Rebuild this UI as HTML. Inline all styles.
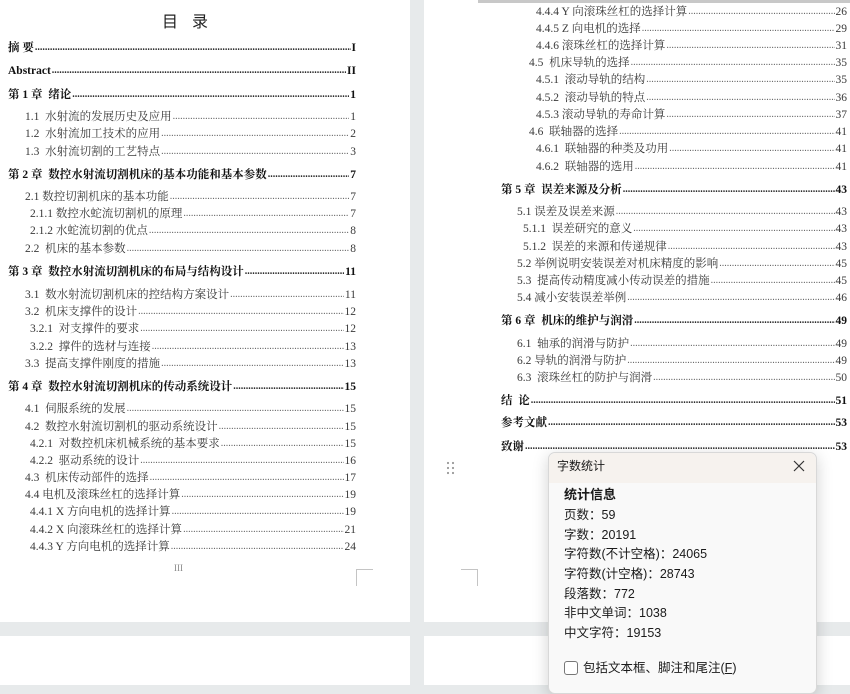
<!DOCTYPE html>
<html><head><meta charset="utf-8">
<style>
html,body{margin:0;padding:0;width:850px;height:685px;overflow:hidden;background:#e7eaeb;}
.pg{position:absolute;background:#fff;}
.r{position:absolute;display:flex;height:14px;line-height:14px;font-family:"Liberation Serif","Noto Serif CJK SC",serif;font-size:11.5px;color:#3a3a3a;white-space:nowrap;}
.r .d{flex:1;overflow:hidden;margin:0 1px;color:#666;font-size:10px;}
.r .d::before{content:"................................................................................................................................................................................................................................................";}
.b{font-weight:bold;color:#111;}
.b .d{color:#222;}
.dlg{position:absolute;left:548px;top:452px;width:267px;height:240px;background:#f9f9f9;border:1px solid #d8d8d8;border-radius:7px;box-shadow:0 4px 16px rgba(0,0,0,0.18);font-family:"Liberation Sans","Noto Sans CJK SC",sans-serif;color:#1a1a1a;}
.dlg .hd{height:30px;background:#f6f2ee;border-radius:7px 7px 0 0;}
.dlg .t{position:absolute;left:8px;top:4px;font-size:12px;}
.dlg .l{position:absolute;left:15px;font-size:12.5px;line-height:16px;}
</style></head><body>
<div class="pg" style="left:0;top:0;width:410px;height:622px"></div>
<div class="pg" style="left:424px;top:0;width:426px;height:622px"></div>
<div style="position:absolute;left:478px;top:0;width:372px;height:3px;background:#c8c8c8"></div>
<div class="pg" style="left:0;top:636px;width:410px;height:49px"></div>
<div class="pg" style="left:424px;top:636px;width:426px;height:49px"></div>

<div style="position:absolute;left:162px;top:8px;font-family:'Noto Sans CJK SC',sans-serif;font-size:16px;letter-spacing:14px;color:#222">目录</div>

<div class="r b" style="left:8px;width:348px;top:41px"><span>摘 要</span><span class="d"></span><span>I</span></div>
<div class="r b" style="left:8px;width:348px;top:64px"><span>Abstract</span><span class="d"></span><span>II</span></div>
<div class="r b" style="left:8px;width:348px;top:88px"><span>第 1 章&nbsp; 绪论</span><span class="d"></span><span>1</span></div>
<div class="r" style="left:25px;width:331px;top:110px"><span>1.1&nbsp; 水射流的发展历史及应用</span><span class="d"></span><span>1</span></div>
<div class="r" style="left:25px;width:331px;top:127px"><span>1.2&nbsp; 水射流加工技术的应用</span><span class="d"></span><span>2</span></div>
<div class="r" style="left:25px;width:331px;top:145px"><span>1.3&nbsp; 水射流切割的工艺特点</span><span class="d"></span><span>3</span></div>
<div class="r b" style="left:8px;width:348px;top:168px"><span>第 2 章&nbsp; 数控水射流切割机床的基本功能和基本参数</span><span class="d"></span><span>7</span></div>
<div class="r" style="left:25px;width:331px;top:190px"><span>2.1 数控切割机床的基本功能</span><span class="d"></span><span>7</span></div>
<div class="r" style="left:30px;width:326px;top:207px"><span>2.1.1 数控水蛇流切割机的原理</span><span class="d"></span><span>7</span></div>
<div class="r" style="left:30px;width:326px;top:224px"><span>2.1.2 水蛇流切割的优点</span><span class="d"></span><span>8</span></div>
<div class="r" style="left:25px;width:331px;top:242px"><span>2.2&nbsp; 机床的基本参数</span><span class="d"></span><span>8</span></div>
<div class="r b" style="left:8px;width:348px;top:265px"><span>第 3 章&nbsp; 数控水射流切割机床的布局与结构设计</span><span class="d"></span><span>11</span></div>
<div class="r" style="left:25px;width:331px;top:288px"><span>3.1&nbsp; 数水射流切割机床的控结构方案设计</span><span class="d"></span><span>11</span></div>
<div class="r" style="left:25px;width:331px;top:305px"><span>3.2&nbsp; 机床支撑件的设计</span><span class="d"></span><span>12</span></div>
<div class="r" style="left:30px;width:326px;top:322px"><span>3.2.1&nbsp; 对支撑件的要求</span><span class="d"></span><span>12</span></div>
<div class="r" style="left:30px;width:326px;top:340px"><span>3.2.2&nbsp; 撑件的选材与连接</span><span class="d"></span><span>13</span></div>
<div class="r" style="left:25px;width:331px;top:357px"><span>3.3&nbsp; 提高支撑件刚度的措施</span><span class="d"></span><span>13</span></div>
<div class="r b" style="left:8px;width:348px;top:380px"><span>第 4 章&nbsp; 数控水射流切割机床的传动系统设计</span><span class="d"></span><span>15</span></div>
<div class="r" style="left:25px;width:331px;top:402px"><span>4.1&nbsp; 伺服系统的发展</span><span class="d"></span><span>15</span></div>
<div class="r" style="left:25px;width:331px;top:420px"><span>4.2&nbsp; 数控水射流切割机的驱动系统设计</span><span class="d"></span><span>15</span></div>
<div class="r" style="left:30px;width:326px;top:437px"><span>4.2.1&nbsp; 对数控机床机械系统的基本要求</span><span class="d"></span><span>15</span></div>
<div class="r" style="left:30px;width:326px;top:454px"><span>4.2.2&nbsp; 驱动系统的设计</span><span class="d"></span><span>16</span></div>
<div class="r" style="left:25px;width:331px;top:471px"><span>4.3&nbsp; 机床传动部件的选择</span><span class="d"></span><span>17</span></div>
<div class="r" style="left:25px;width:331px;top:488px"><span>4.4 电机及滚珠丝杠的选择计算</span><span class="d"></span><span>19</span></div>
<div class="r" style="left:30px;width:326px;top:505px"><span>4.4.1 X 方向电机的选择计算</span><span class="d"></span><span>19</span></div>
<div class="r" style="left:30px;width:326px;top:523px"><span>4.4.2 X 向滚珠丝杠的选择计算</span><span class="d"></span><span>21</span></div>
<div class="r" style="left:30px;width:326px;top:540px"><span>4.4.3 Y 方向电机的选择计算</span><span class="d"></span><span>24</span></div>
<div class="r" style="left:174px;top:561px;font-size:9px;color:#888">III</div>

<div style="position:absolute;left:356px;top:569px;width:16px;height:16px;border-top:1px solid #c4c4c4;border-left:1px solid #c4c4c4"></div>
<div style="position:absolute;left:461px;top:569px;width:16px;height:16px;border-top:1px solid #c4c4c4;border-right:1px solid #c4c4c4"></div>

<div class="r" style="left:536px;width:311px;top:5px"><span>4.4.4 Y 向滚珠丝杠的选择计算</span><span class="d"></span><span>26</span></div>
<div class="r" style="left:536px;width:311px;top:22px"><span>4.4.5 Z 向电机的选择</span><span class="d"></span><span>29</span></div>
<div class="r" style="left:536px;width:311px;top:39px"><span>4.4.6 滚珠丝杠的选择计算</span><span class="d"></span><span>31</span></div>
<div class="r" style="left:529px;width:318px;top:56px"><span>4.5&nbsp; 机床导轨的选择</span><span class="d"></span><span>35</span></div>
<div class="r" style="left:536px;width:311px;top:73px"><span>4.5.1&nbsp; 滚动导轨的结构</span><span class="d"></span><span>35</span></div>
<div class="r" style="left:536px;width:311px;top:91px"><span>4.5.2&nbsp; 滚动导轨的特点</span><span class="d"></span><span>36</span></div>
<div class="r" style="left:536px;width:311px;top:108px"><span>4.5.3 滚动导轨的寿命计算</span><span class="d"></span><span>37</span></div>
<div class="r" style="left:529px;width:318px;top:125px"><span>4.6&nbsp; 联轴器的选择</span><span class="d"></span><span>41</span></div>
<div class="r" style="left:536px;width:311px;top:142px"><span>4.6.1&nbsp; 联轴器的种类及功用</span><span class="d"></span><span>41</span></div>
<div class="r" style="left:536px;width:311px;top:160px"><span>4.6.2&nbsp; 联轴器的选用</span><span class="d"></span><span>41</span></div>
<div class="r b" style="left:501px;width:346px;top:183px"><span>第 5 章&nbsp; 误差来源及分析</span><span class="d"></span><span>43</span></div>
<div class="r" style="left:517px;width:330px;top:205px"><span>5.1 误差及误差来源</span><span class="d"></span><span>43</span></div>
<div class="r" style="left:523px;width:324px;top:222px"><span>5.1.1&nbsp; 误差研究的意义</span><span class="d"></span><span>43</span></div>
<div class="r" style="left:523px;width:324px;top:240px"><span>5.1.2&nbsp; 误差的来源和传递规律</span><span class="d"></span><span>43</span></div>
<div class="r" style="left:517px;width:330px;top:257px"><span>5.2 举例说明安装误差对机床精度的影响</span><span class="d"></span><span>45</span></div>
<div class="r" style="left:517px;width:330px;top:274px"><span>5.3&nbsp; 提高传动精度减小传动误差的措施</span><span class="d"></span><span>45</span></div>
<div class="r" style="left:517px;width:330px;top:291px"><span>5.4 减小安装误差举例</span><span class="d"></span><span>46</span></div>
<div class="r b" style="left:501px;width:346px;top:314px"><span>第 6 章&nbsp; 机床的维护与润滑</span><span class="d"></span><span>49</span></div>
<div class="r" style="left:517px;width:330px;top:337px"><span>6.1&nbsp; 轴承的润滑与防护</span><span class="d"></span><span>49</span></div>
<div class="r" style="left:517px;width:330px;top:354px"><span>6.2 导轨的润滑与防护</span><span class="d"></span><span>49</span></div>
<div class="r" style="left:517px;width:330px;top:371px"><span>6.3&nbsp; 滚珠丝杠的防护与润滑</span><span class="d"></span><span>50</span></div>
<div class="r b" style="left:501px;width:346px;top:394px"><span>结&nbsp; 论</span><span class="d"></span><span>51</span></div>
<div class="r b" style="left:501px;width:346px;top:416px"><span>参考文献</span><span class="d"></span><span>53</span></div>
<div class="r b" style="left:501px;width:346px;top:440px"><span>致谢</span><span class="d"></span><span>53</span></div>

<svg style="position:absolute;left:446px;top:461px" width="10" height="14"><g fill="#999"><circle cx="2" cy="2" r="1.1"/><circle cx="7" cy="2" r="1.1"/><circle cx="2" cy="7" r="1.1"/><circle cx="7" cy="7" r="1.1"/><circle cx="2" cy="12" r="1.1"/><circle cx="7" cy="12" r="1.1"/></g></svg>

<div class="dlg">
<div class="hd"></div>
<div class="t">字数统计</div>
<svg style="position:absolute;left:244px;top:7px" width="12" height="12"><path d="M1 1L11 11M11 1L1 11" stroke="#333" stroke-width="1.2"/></svg>
<div class="l" style="top:34px;font-weight:bold;font-size:13px">统计信息</div>
<div class="l" style="top:54px">页数：59</div>
<div class="l" style="top:74px">字数：20191</div>
<div class="l" style="top:93px">字符数(不计空格)：24065</div>
<div class="l" style="top:113px">字符数(计空格)：28743</div>
<div class="l" style="top:133px">段落数：772</div>
<div class="l" style="top:152px">非中文单词：1038</div>
<div class="l" style="top:172px">中文字符：19153</div>
<div style="position:absolute;left:15px;top:208px;width:12px;height:12px;border:1px solid #777;border-radius:3px;background:#fff"></div>
<div class="l" style="left:34px;top:207px">包括文本框、脚注和尾注(<u>F</u>)</div>
</div>
</body></html>
